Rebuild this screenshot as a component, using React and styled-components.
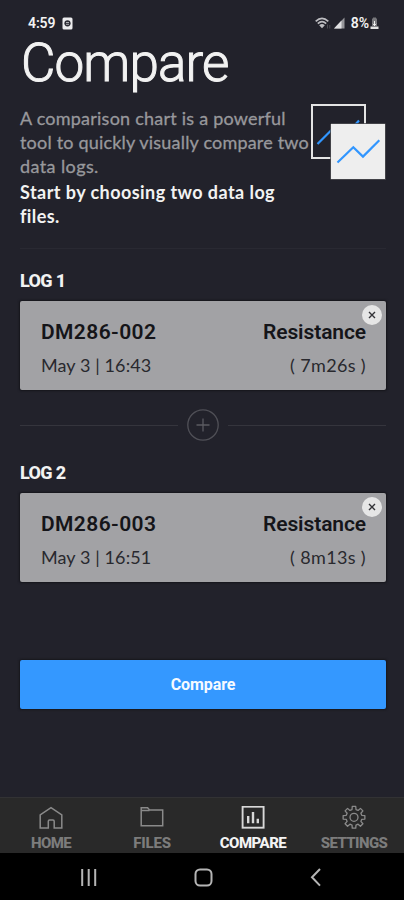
import React from 'react'
import styled, { createGlobalStyle } from 'styled-components'

const GlobalStyle = createGlobalStyle`
    * {
        box-sizing: border-box;
    }
    body {
        margin: 0;
        background-color: #22222b;
    }
    p, h1, h2, h3 {
        margin: 0;
        white-space: nowrap;
    }
    svg {
        display: block;
    }
`
const Screen = styled.div`
    width: 404px;
    height: 900px;
    display: flex;
    flex-direction: column;
    overflow: hidden;
    background-color: #22222b;
    color: #f2f2f2;
    font-family: Roboto, sans-serif;
`
const StatusBar = styled.header`
    height: 40px;
    padding: 6px 25px 0 28px;
    display: flex;
    align-items: center;
    justify-content: space-between;
`
const StatusGroup = styled.div`
    display: flex;
    align-items: center;
    gap: ${(props) => props.$gap}px;
`
const StatusText = styled.p`
    font-size: 14px;
    font-weight: 600;
    line-height: 16px;
    letter-spacing: ${(props) => props.$spacing || 0}px;
`
const Main = styled.main`
    flex: 1;
    padding: 0 18px 0 20px;
`
const Title = styled.h1`
    padding-left: 1px;
    font-size: 53px;
    font-weight: 300;
    line-height: 46px;
    height: 44px;
    letter-spacing: -.9px;
    -webkit-text-stroke: 1px #f2f2f2;
`
const Intro = styled.section`
    height: 165px;
    padding-top: 22px;
    display: flex;
    justify-content: space-between;
    border-bottom: 1px solid #292932;
`
const IntroText = styled.div`
    width: 290px;
    font-family: Lato, sans-serif;
    font-size: 18px;
    line-height: 24px;
`
const Lead = styled.p`
    color: #98989c;
    letter-spacing: ${(props) => props.$spacing}px;
    -webkit-text-stroke: .3px #98989c;
`
const Prompt = styled.p`
    position: relative;
    top: 2px;
    font-weight: 700;
    letter-spacing: ${(props) => props.$spacing}px;
`
const IntroArt = styled.svg`
    flex: none;
    margin: -3px 0 0 0;
`
const LogLabel = styled.h2`
    height: 20px;
    font-size: 18px;
    font-weight: 800;
    line-height: 20px;
    letter-spacing: -.65px;
`
const LogSection = styled.section`
    padding-top: ${(props) => props.$top}px;
    display: flex;
    flex-direction: column;
    gap: 10px;
`
const Card = styled.article`
    position: relative;
    width: 366px;
    height: 89px;
    padding: 18px 20px 0 21px;
    border-radius: 2px;
    background-color: #a2a2a5;
    box-shadow: 0 0 2px 1px #15151b;
    color: #151519;
`
const CardRow = styled.div`
    display: flex;
    justify-content: space-between;
    & + & {
        margin-top: 9px;
    }
`
const CardTitle = styled.h3`
    font-size: 21px;
    font-weight: 600;
    line-height: 26px;
    letter-spacing: ${(props) => props.$spacing}px;
`
const CardMeta = styled.p`
    font-family: Lato, sans-serif;
    font-size: 18px;
    line-height: 22px;
    letter-spacing: ${(props) => props.$spacing}px;
    color: #29292e;
`
const CloseButton = styled.button`
    position: absolute;
    top: 4px;
    right: 4px;
    width: 20px;
    height: 20px;
    padding: 0;
    border: none;
    border-radius: 50%;
    display: grid;
    place-items: center;
    background-color: #e6e6e6;
`
const Joiner = styled.div`
    height: 32px;
    margin-top: 19px;
    display: flex;
    align-items: center;
    gap: 9px;
`
const Line = styled.div`
    flex: 1;
    height: 1px;
    background-color: #35353d;
`
const CompareButton = styled.button`
    width: 366px;
    height: 49px;
    margin-top: 78px;
    padding: 0;
    border: none;
    border-radius: 2px;
    background-color: #3498ff;
    box-shadow: 0 0 2px 1px #17171c;
    color: #f6faff;
    font: 700 16px/48px Roboto, sans-serif;
    letter-spacing: -.1px;
`
const TabBar = styled.nav`
    height: 56px;
    flex: none;
    display: grid;
    grid-template-columns: repeat(4, 1fr);
    border-top: 1px solid #323234;
    background-color: #292929;
`
const Tab = styled.div`
    padding: 8px 0 0 1px;
    display: flex;
    flex-direction: column;
    align-items: center;
    gap: 3px;
    color: ${(props) => (props.$active ? '#f4f4f4' : '#7c7c7c')};
    svg {
        color: ${(props) => (props.$active ? '#d8d8d8' : '#8a8a8a')};
    }
    p {
        font-size: 15px;
        font-weight: 800;
        line-height: 20px;
        letter-spacing: ${(props) => props.$spacing}px;
    }
`
const SystemNav = styled.footer`
    height: 47px;
    flex: none;
    padding: 0 82px 0 79px;
    display: flex;
    justify-content: space-between;
    background-color: #000000;
`

const LOGS = [
    { label: 'LOG 1', name: 'DM286-002', date: 'May 3 | 16:43', duration: '( 7m26s )' },
    { label: 'LOG 2', name: 'DM286-003', date: 'May 3 | 16:51', duration: '( 8m13s )' },
]

const WifiIcon = () => (
    <svg width="16" height="12" viewBox="0 0 16 12" fill="none" stroke="#bdbdc1" strokeWidth="1.7">
        <path d="M.7 4.4Q7 -1.5 13.3 4.4M2.8 6.6Q7 2.8 11.2 6.6" />
        <path d="M4.2 8.2Q7 5.6 9.8 8.2L7 11.2Z" fill="#bdbdc1" stroke="none" />
        <path d="M12.5 7.5v4M14.8 8v3.5" strokeWidth="1" stroke="#4c4c53" />
    </svg>
)

const BarsIcon = () => (
    <svg width="11" height="12" viewBox="0 0 11 12">
        <path d="M0 11.5L10.5 .5V11.5Z" fill="#96969a" />
        <path d="M0 11.5L7.5 3.6V11.5Z" fill="#e0e0e2" />
    </svg>
)

const BatteryIcon = () => (
    <svg width="9" height="13" viewBox="0 0 9 13">
        <path d="M2 1.5h1V.5h3v1h1V9H2Z" fill="#77777b" />
        <path d="M4.5 4v5M3 6.8l1.5 1.7L6 6.8" stroke="#efefef" fill="none" />
        <path d="M.5 9.5h8V12h-8Z" fill="#e2e2e2" />
    </svg>
)

const AppBadge = () => (
    <svg width="11" height="13" viewBox="0 0 11 13">
        <rect x=".5" y=".5" width="10" height="12" rx="1.5" fill="#ececee" />
        <circle cx="5.5" cy="6.3" r="3.1" fill="#2b2b33" />
        <path d="M4 5.5h3M4 7.3h3" stroke="#b8b8bc" strokeWidth=".9" />
    </svg>
)

const ChartArt = () => (
    <IntroArt width="76" height="78" viewBox="0 0 76 78" fill="none">
        <rect x="2" y="2" width="53" height="53" fill="#22222b" stroke="#e4e4e4" strokeWidth="2" />
        <path d="M7.5 41L25 23.5L35 33L49 17.5" stroke="#3196ff" strokeWidth="2.2" />
        <rect x="20.5" y="20.5" width="55" height="56" fill="#eeeeee" stroke="#17171c" strokeWidth=".6" />
        <path d="M27.5 59.5L43.3 44.2L53 53.6L69.3 37.2" stroke="#3196ff" strokeWidth="2.2" />
    </IntroArt>
)

const PlusCircle = () => (
    <svg width="32" height="32" viewBox="0 0 32 32" fill="none" stroke="#505057" strokeWidth="1.3">
        <circle cx="16" cy="16" r="15.2" />
        <path d="M16 9.5v13M9.5 16h13" stroke="#5b5b62" />
    </svg>
)

const HomeIcon = () => (
    <svg width="24" height="24" viewBox="0 0 24 24" fill="none" stroke="currentColor" strokeWidth="1.5">
        <path d="M1.2 22V9L12 1.7L22.8 9V22H15.2V15.2Q15.2 14 14 14H10.5Q9.3 14 9.3 15.2V22Z" />
    </svg>
)

const FolderIcon = () => (
    <svg width="24" height="24" viewBox="0 0 24 24" fill="none" stroke="currentColor" strokeWidth="1.5">
        <path d="M1.2 19.7V1.7H7.6L9.5 4H22.7V19.7Z" />
        <path d="M1.2 4.5H9.5" />
    </svg>
)

const CompareIcon = () => (
    <svg width="24" height="24" viewBox="0 0 24 24" fill="none" stroke="currentColor">
        <rect x="1.6" y=".7" width="21" height="21" strokeWidth="1.9" />
        <path d="M7.2 17.2V10M12 17.2V6M16.8 17.2V12.8" strokeWidth="2.4" />
    </svg>
)

// outline of an eight toothed gear, built around the centre of a 24px box
const gearPath = () => {
    const points = []
    for (let i = 0; i < 8; i++) {
        const middle = (i * Math.PI) / 4
        const corners = [[-0.25, 8], [-0.16, 11], [0.16, 11], [0.25, 8]]
        corners.forEach(([offset, radius]) => {
            const x = 12 + radius * Math.sin(middle + offset)
            const y = 11.3 - radius * Math.cos(middle + offset)
            points.push(`${x.toFixed(2)} ${y.toFixed(2)}`)
        })
    }
    return `M${points.join('L')}Z`
}

const GearIcon = () => (
    <svg width="24" height="24" viewBox="0 0 24 24" fill="none" stroke="currentColor" strokeWidth="1.3" strokeLinejoin="round" overflow="visible">
        <path d={gearPath()} />
        <circle cx="12" cy="11.3" r="4" />
    </svg>
)

const TABS = [
    { label: 'HOME', icon: HomeIcon, spacing: -0.6 },
    { label: 'FILES', icon: FolderIcon, spacing: -0.2 },
    { label: 'COMPARE', icon: CompareIcon, spacing: -0.5, active: true },
    { label: 'SETTINGS', icon: GearIcon, spacing: -0.6 },
]

const LogCard = ({ log, top }) => (
    <LogSection $top={top}>
        <LogLabel>{log.label}</LogLabel>
        <Card>
            <CardRow>
                <CardTitle $spacing={0.4}>{log.name}</CardTitle>
                <CardTitle $spacing={-0.1}>Resistance</CardTitle>
            </CardRow>
            <CardRow>
                <CardMeta $spacing={0.1}>{log.date}</CardMeta>
                <CardMeta $spacing={0.35}>{log.duration}</CardMeta>
            </CardRow>
            <CloseButton aria-label="Remove log">
                <svg width="8" height="8" viewBox="0 0 8 8" stroke="#333337" strokeWidth="1.4">
                    <path d="M1 1L7 7M7 1L1 7" />
                </svg>
            </CloseButton>
        </Card>
    </LogSection>
)

const App = () => {
    return (
        <Screen>
            <GlobalStyle />

            <StatusBar>
                <StatusGroup $gap={7}>
                    <StatusText $spacing={-0.1}>4:59</StatusText>
                    <AppBadge />
                </StatusGroup>
                <StatusGroup $gap={6}>
                    <StatusGroup $gap={3}>
                        <WifiIcon />
                        <BarsIcon />
                    </StatusGroup>
                    <StatusGroup $gap={1}>
                        <StatusText $spacing={0}>8%</StatusText>
                        <BatteryIcon />
                    </StatusGroup>
                </StatusGroup>
            </StatusBar>

            <Main>
                <Title>Compare</Title>
                <Intro>
                    <IntroText>
                        <Lead $spacing={0.23}>A comparison chart is a powerful</Lead>
                        <Lead $spacing={0.19}>tool to quickly visually compare two</Lead>
                        <Lead $spacing={0.4}>data logs.</Lead>
                        <Prompt $spacing={0.44}>Start by choosing two data log</Prompt>
                        <Prompt $spacing={0.4}>files.</Prompt>
                    </IntroText>
                    <ChartArt />
                </Intro>

                <LogCard log={LOGS[0]} top={22} />
                <Joiner>
                    <Line />
                    <PlusCircle />
                    <Line />
                </Joiner>
                <LogCard log={LOGS[1]} top={22} />

                <CompareButton>Compare</CompareButton>
            </Main>

            <TabBar>
                {TABS.map(({ label, icon: Icon, spacing, active }) => (
                    <Tab key={label} $active={active} $spacing={spacing}>
                        <Icon />
                        <p>{label}</p>
                    </Tab>
                ))}
            </TabBar>

            <SystemNav>
                <svg width="18" height="47" viewBox="0 0 18 47" stroke="#b5b5b5" strokeWidth="2">
                    <path d="M3.2 16v17M9.7 16v17M16.2 16v17" />
                </svg>
                <svg width="20" height="47" viewBox="0 0 20 47" fill="none" stroke="#b5b5b5" strokeWidth="2">
                    <rect x="1.5" y="16.5" width="16" height="16" rx="4.5" />
                </svg>
                <svg width="12" height="47" viewBox="0 0 12 47" fill="none" stroke="#b5b5b5" strokeWidth="2">
                    <path d="M10 16L2 24.3L10 32.6" />
                </svg>
            </SystemNav>
        </Screen>
    )
}

export default App
